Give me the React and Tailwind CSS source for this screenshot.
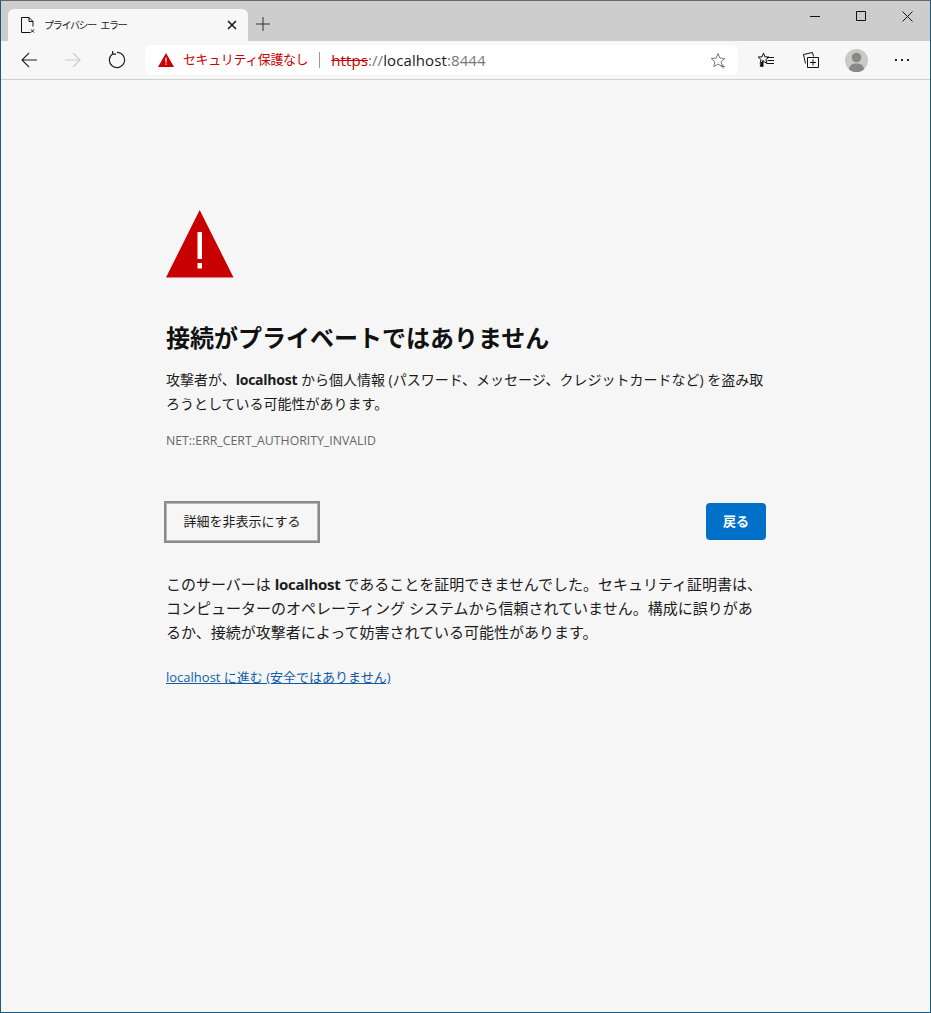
import React from "react";

const FONT = "font-['Open_Sans','Noto_Sans_CJK_JP',sans-serif]";

const TabIcon = () => (
  <svg width="16" height="18" viewBox="0 0 16 18" fill="none" stroke="#111" strokeWidth="1">
    <path d="M1.500 1.500h7.500l4 4v5M9 1.500v4h4M1.500 1.500v15h9" />
    <path d="M11 13.500l3 3M14 13.500l-3 3" />
  </svg>
);

const CloseIcon = () => (
  <svg width="10" height="10" viewBox="0 0 10 10" stroke="#111" strokeWidth="1.5">
    <path d="M1 1l8 8M9 1l-8 8" />
  </svg>
);

const PlusIcon = () => (
  <svg width="14" height="14" viewBox="0 0 14 14" stroke="#333" strokeWidth="1">
    <path d="M7 0v14M0 7h14" />
  </svg>
);

const WindowButtons = () => (
  <div className="ml-auto flex h-[30px] items-start">
    <div className="flex h-[30px] w-[46px] items-center justify-center">
      <svg width="10" height="10" viewBox="0 0 10 10" stroke="#111">
        <path d="M0 5.500h10" />
      </svg>
    </div>
    <div className="flex h-[30px] w-[46px] items-center justify-center">
      <svg width="10" height="10" viewBox="0 0 10 10" fill="none" stroke="#111">
        <path d="M.5.5h9v9h-9z" />
      </svg>
    </div>
    <div className="flex h-[30px] w-[46px] items-center justify-center">
      <svg width="11" height="11" viewBox="0 0 11 11" stroke="#111">
        <path d="M.5.5l10 10M10.500.5l-10 10" />
      </svg>
    </div>
  </div>
);

const Arrow = ({ color, flip }) => (
  <svg
    width="16"
    height="16"
    viewBox="0 0 16 16"
    fill="none"
    stroke={color}
    strokeWidth="1.1"
    className={flip ? "rotate-180" : ""}
  >
    <path d="M16 8H1M8 1L1 8l7 7" />
  </svg>
);

const Refresh = () => (
  <svg width="18" height="18" viewBox="0 0 18 18" fill="none" stroke="#222" strokeWidth="1.2">
    <path d="M5.200 2.400A7.600 7.600 0 1 0 9 1.400" />
    <path d="M4.600 0v3.100h3.400" />
  </svg>
);

const WarnSmall = () => (
  <svg width="16" height="14" viewBox="0 0 16 14">
    <path d="M8 0l8 14H0z" fill="#c80000" />
    <path d="M7.400 4.500h1.200v5H7.400zM7.400 10.500h1.200v1.300H7.400z" fill="#fff" />
  </svg>
);

const StarAdd = () => (
  <svg width="17" height="17" viewBox="0 0 17 17" fill="none" stroke="#777" strokeWidth="1">
    <path d="M8 1.500l1.900 4.600 4.900.4-3.700 3.200 1.100 4.800L8 12l-4.200 2.500 1.100-4.800L1.200 6.500l4.900-.4z" />
    <path d="M13 12.500v4M11 14.500h4" />
  </svg>
);

const Favorites = () => (
  <svg width="17" height="16" viewBox="0 0 17 16" fill="none" stroke="#111" strokeWidth="1">
    <path d="M5.500 1l1.400 3.800 4 .2-3 2.600 1 3.800-3.400-2.100-3.400 2.100 1-3.800-3-2.600 4-.2z" />
    <path d="M5 8.500v6l-3-.5z" fill="#111" />
    <path d="M9 5.500h7M9.500 8.500h6.500M9 11.500h7" />
  </svg>
);

const Collections = () => (
  <svg width="16" height="16" viewBox="0 0 16 16" fill="none" stroke="#111" strokeWidth="1">
    <path d="M4.500 5.500h11v10h-11zM10 7.500v6M7 10.500h6" />
    <path d="M2.500 11.500L.5 2.500l9-2 1 4" />
  </svg>
);

const Profile = () => (
  <div className="flex h-[23px] w-[23px] items-center justify-center overflow-hidden rounded-full bg-[#cbc9c7]">
    <svg width="23" height="23" viewBox="0 0 23 23" fill="#8a8886">
      <circle cx="11.500" cy="8.500" r="4.800" />
      <path d="M3.500 23c0-6 3-8.500 8-8.500s8 2.500 8 8.500z" />
    </svg>
  </div>
);

const App = () => {
  return (
    <div
      className={`${FONT} flex h-[1013px] w-[931px] flex-col overflow-hidden border-x border-x-[#1d5a78] border-b border-b-[#1d5a78] border-t border-t-[#666] bg-[#f6f6f6] text-[#1b1b1b]`}
    >
      {/* tab strip */}
      <div className="flex h-[40px] items-start bg-[#cdcdcd] pl-[7px]">
        <div className="mt-2 flex h-[32px] w-[240px] items-center rounded-t-md bg-[#f7f7f7] pl-3 pr-[11px]">
          <TabIcon />
          <span className="ml-[8px] text-[10px] tracking-[-1.3px] text-[#222] [word-spacing:3px]">プライバシー エラー</span>
          <span className="ml-auto flex">
            <CloseIcon />
          </span>
        </div>
        <div className="ml-2 mt-4 flex">
          <PlusIcon />
        </div>
        <WindowButtons />
      </div>

      {/* toolbar */}
      <div className="flex h-[39px] items-center border-b border-b-[#d0d0d0] bg-[#f7f7f7]">
        <div className="flex w-[144px] items-center pl-5">
          <Arrow color="#222" />
          <div className="ml-[28px] flex">
            <Arrow color="#c9c9c9" flip />
          </div>
          <div className="ml-[27px] flex">
            <Refresh />
          </div>
        </div>
        <div className="flex h-[30px] w-[593px] items-center rounded-md bg-white pl-[13px] pr-[11px]">
          <WarnSmall />
          <span className="ml-[9px] text-[13px] tracking-[-0.4px] text-[#c80000]">セキュリティ保護なし</span>
          <span className="ml-[11px] h-4 w-px bg-[#999]" />
          <span className="ml-[11px] text-[15px] tracking-[0.1px]">
            <span className="text-[#c80000] line-through">https</span>
            <span className="text-[#767676]">://</span>
            <span className="text-[#1b1b1b]">localhost</span>
            <span className="text-[#767676]">:8444</span>
          </span>
          <span className="ml-auto flex">
            <StarAdd />
          </span>
        </div>
        <div className="ml-[20px] flex">
          <Favorites />
        </div>
        <div className="ml-[28px] flex">
          <Collections />
        </div>
        <div className="ml-[26px] flex">
          <Profile />
        </div>
        <div className="ml-[27px] flex gap-[4px]">
          <span className="h-[2px] w-[2px] bg-[#222]" />
          <span className="h-[2px] w-[2px] bg-[#222]" />
          <span className="h-[2px] w-[2px] bg-[#222]" />
        </div>
      </div>

      {/* page */}
      <div className="w-[765px] pl-[165px] pt-[130px]">
        <svg width="68" height="68" viewBox="0 0 68 68" className="block">
          <path d="M33.700 0l33.800 67.500H0z" fill="#c80000" />
          <path d="M31.500 22h4.500v27h-4.500zM31.500 53h4.500v5.500h-4.500z" fill="#fff" />
        </svg>
        <h1 className="mt-[42px] text-[24px] font-semibold leading-[36px] text-[#111]">
          接続がプライベートではありません
        </h1>
        <p className="mt-[12px] text-[14px] leading-[24px]">
          攻撃者が、<b className="tracking-[-0.25px]">localhost</b> から個人情報 (パスワード、メッセージ、クレジットカードなど) を盗み取ろうとしている可能性があります。
        </p>
        <p className="mt-[16px] text-[12.3px] leading-[18px] text-[#666]">NET::ERR_CERT_AUTHORITY_INVALID</p>
        <div className="mt-[53px] flex items-start justify-between">
          <button className="h-[38px] w-[152px] border border-[#b5b5b5] bg-[#f6f6f6] text-[13px] text-[#1b1b1b] outline-2 outline-[#8a8a8a]">
            詳細を非表示にする
          </button>
          <button className="h-[37px] w-[60px] rounded-sm bg-[#0070c9] text-[13px] font-semibold text-white">
            戻る
          </button>
        </div>
        <p className="mt-[31px] text-[15px] leading-[24px]">
          このサーバーは <b className="tracking-[-0.3px]">localhost</b> であることを証明できませんでした。セキュリティ証明書は、コンピューターのオペレーティング システムから信頼されていません。構成に誤りがあるか、接続が攻撃者によって妨害されている可能性があります。
        </p>
        <p className="mt-[21px] text-[13px] leading-[24px]">
          <a className="text-[#0f5ca8] underline">localhost に進む (安全ではありません)</a>
        </p>
      </div>
    </div>
  );
};

export default App;
